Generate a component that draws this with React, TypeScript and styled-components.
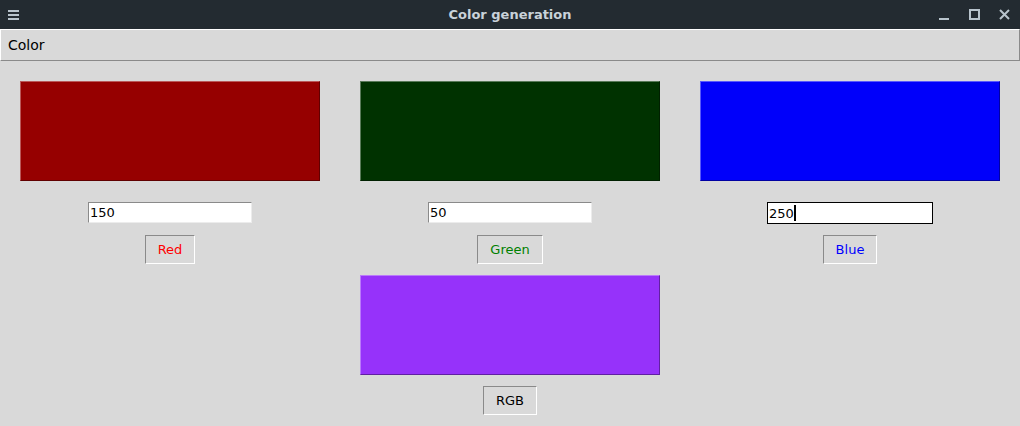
import { FC } from "react";
import styled, { createGlobalStyle } from "styled-components";

const GlobalStyle = createGlobalStyle`
  html, body {
    margin: 0;
    padding: 0;
    background: #d9d9d9;
    overflow: hidden;
  }
  * {
    box-sizing: border-box;
  }
`;

const Window = styled.div`
  width: 1020px;
  height: 426px;
  display: flex;
  flex-direction: column;
  background: #d9d9d9;
  font-family: "DejaVu Sans", sans-serif;
`;

const TitleBar = styled.div`
  height: 29px;
  display: flex;
  align-items: center;
  justify-content: space-between;
  padding: 0 10px 0 8px;
  background: #232b31;
  position: relative;
`;

const Title = styled.span`
  position: absolute;
  left: 0;
  right: 0;
  text-align: center;
  font-weight: bold;
  font-size: 13px;
  color: #c9d2da;
  pointer-events: none;
`;

const WindowControls = styled.div`
  display: flex;
  align-items: center;
  gap: 19px;
`;

const MenuBar = styled.div`
  height: 32px;
  display: flex;
  align-items: center;
  padding-left: 7px;
  border-top: 1px solid #ffffff;
  border-left: 1px solid #ffffff;
  border-bottom: 1px solid #8a8a8a;
  border-right: 1px solid #8a8a8a;
  font-size: 14px;
  color: #000;
`;

const Content = styled.div`
  display: flex;
  flex-direction: column;
  padding-top: 20px;
`;

const Row = styled.div`
  display: grid;
  grid-template-columns: repeat(3, 340px);
  align-items: start;
`;

const Column = styled.div`
  display: flex;
  flex-direction: column;
  align-items: center;
`;

const Swatch = styled.div<{ $color: string }>`
  width: 300px;
  height: 100px;
  background: ${(p) => p.$color};
  border-top: 1px solid rgba(255, 255, 255, 0.35);
  border-left: 1px solid rgba(255, 255, 255, 0.35);
  border-bottom: 1px solid rgba(0, 0, 0, 0.35);
  border-right: 1px solid rgba(0, 0, 0, 0.35);
`;

const Entry = styled.div<{ $focused?: boolean }>`
  margin-top: 21px;
  margin-bottom: ${(p) => (p.$focused ? "-1px" : "0")};
  width: ${(p) => (p.$focused ? "166px" : "164px")};
  height: ${(p) => (p.$focused ? "22px" : "21px")};
  background: #ffffff;
  display: flex;
  align-items: center;
  padding-left: 1px;
  font-size: 13px;
  color: #000;
  border-top: 1px solid ${(p) => (p.$focused ? "#000" : "#8a8a8a")};
  border-left: 1px solid ${(p) => (p.$focused ? "#000" : "#8a8a8a")};
  border-bottom: 1px solid ${(p) => (p.$focused ? "#000" : "#ececec")};
  border-right: 1px solid ${(p) => (p.$focused ? "#000" : "#ececec")};
`;

const Caret = styled.span`
  display: inline-block;
  width: 2px;
  height: 16px;
  background: #000;
`;

const Button = styled.div<{ $color: string }>`
  margin-top: 12px;
  height: 29px;
  display: flex;
  align-items: center;
  justify-content: center;
  padding: 0 12px;
  font-size: 13px;
  color: ${(p) => p.$color};
  border-top: 1px solid #8a8a8a;
  border-left: 1px solid #8a8a8a;
  border-bottom: 1px solid #ffffff;
  border-right: 1px solid #ffffff;
`;

const Mixed = styled(Column)`
  margin-top: 11px;
  & > ${Button} {
    margin-top: 11px;
  }
`;

const channels = [
  { value: "150", label: "Red", text: "#ff0000", swatch: "#960000" },
  { value: "50", label: "Green", text: "#008000", swatch: "#003200" },
  { value: "250", label: "Blue", text: "#0000ff", swatch: "#0000fa", focused: true },
];

const App: FC = () => {
  return (
    <Window>
      <GlobalStyle />
      <TitleBar>
        <svg width="12" height="12" viewBox="0 0 12 12">
          <rect x="0" y="1" width="11" height="2" fill="#b8c4cc" />
          <rect x="0" y="5" width="11" height="2" fill="#b8c4cc" />
          <rect x="0" y="9" width="11" height="2" fill="#b8c4cc" />
        </svg>
        <Title>Color generation</Title>
        <WindowControls>
          <svg width="11" height="12" viewBox="0 0 11 12">
            <rect x="0" y="9" width="10" height="2" fill="#b8c4cc" />
          </svg>
          <svg width="11" height="12" viewBox="0 0 11 12">
            <rect x="1" y="1" width="9" height="9" fill="none" stroke="#b8c4cc" strokeWidth="2" />
          </svg>
          <svg width="11" height="12" viewBox="0 0 11 12">
            <path d="M1 1 L10 10 M10 1 L1 10" stroke="#b8c4cc" strokeWidth="2" />
          </svg>
        </WindowControls>
      </TitleBar>
      <MenuBar>Color</MenuBar>
      <Content>
        <Row>
          {channels.map((c) => (
            <Column key={c.label}>
              <Swatch $color={c.swatch} />
              <Entry $focused={c.focused}>
                {c.value}
                {c.focused && <Caret />}
              </Entry>
              <Button $color={c.text}>{c.label}</Button>
            </Column>
          ))}
        </Row>
        <Mixed>
          <Swatch $color="#9632fa" />
          <Button $color="#000">RGB</Button>
        </Mixed>
      </Content>
    </Window>
  );
};

export default App;
